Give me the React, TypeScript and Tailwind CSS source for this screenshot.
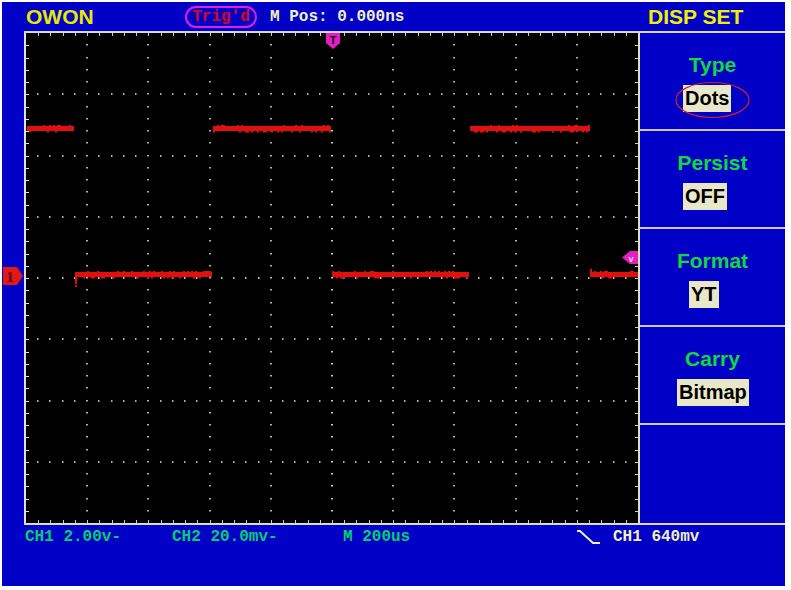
import React from "react";

// plotting area helpers (svg coords, origin at the grid's top-left inside the borders)
const GX = (k: number) => 2 + k * 61.2;
const GY = (m: number) => m * 61.25;

const rng = (seed: number) => {
  let s = seed;
  return () => {
    s = (s * 1103515245 + 12345) % 2147483648;
    return s / 2147483648;
  };
};

const highs: [number, number][] = [
  [3, 50],
  [189, 307],
  [446, 566],
];
const lows: [number, number][] = [
  [51, 188],
  [308, 445],
  [566, 614],
];

const Scope: React.FC = () => {
  const dots: React.ReactNode[] = [];
  for (let k = 1; k <= 9; k++) {
    for (let j = 1; j <= 39; j++) {
      const x = Math.round(GX(k));
      const y = Math.round(j * 12.25);
      const center = k === 5;
      dots.push(
        <rect key={`v${k}-${j}`} x={x - 1} y={y - 1} width={2} height={1.5} fill={center ? "#d0d0a0" : "#b0b0b0"} />
      );
    }
  }
  for (let m = 1; m <= 7; m++) {
    for (let i = 1; i <= 49; i++) {
      const x = Math.round(2 + i * 12.24);
      if (i % 5 === 0) continue;
      const y = Math.round(GY(m));
      const center = m === 4;
      dots.push(
        <rect key={`h${m}-${i}`} x={x - 1} y={y - 1} width={1.5} height={2} fill={center ? "#c8c870" : "#b0b0b0"} />
      );
    }
  }

  const ticks: React.ReactNode[] = [];
  for (let i = 1; i < 50; i++) {
    const x = Math.round(2 + i * 12.24);
    ticks.push(<rect key={`tt${i}`} x={x} y={0} width={1} height={3} fill="#d8d870" />);
    ticks.push(<rect key={`tb${i}`} x={x} y={487} width={1} height={3} fill="#d8d870" />);
  }
  for (let j = 1; j < 40; j++) {
    const y = Math.round(j * 12.25);
    ticks.push(<rect key={`tl${j}`} x={2} y={y} width={3} height={1} fill="#e0e0e0" />);
    ticks.push(<rect key={`tr${j}`} x={611} y={y} width={3} height={1} fill="#d8d870" />);
  }

  const noise: React.ReactNode[] = [];
  const r = rng(7);
  const addNoise = (segs: [number, number][], y: number, tag: string) =>
    segs.forEach(([a, b], si) => {
      for (let x = a; x < b; x += 2) {
        const v = r();
        if (v < 0.2) noise.push(<rect key={`${tag}${si}-${x}`} x={x} y={y - 1} width={2} height={1} fill="#e01010" />);
        else if (v < 0.45) noise.push(<rect key={`${tag}${si}-${x}`} x={x} y={y + 5} width={2} height={1.5} fill="#e01010" />);
      }
    });
  addNoise(highs, 93, "h");
  addNoise(lows, 239, "l");

  return (
    <svg width={616} height={490} className="block bg-black shrink-0">
      {dots}
      <rect x={0} y={0} width={2} height={490} fill="#e0e0e0" />
      <rect x={614} y={0} width={2} height={490} fill="#e0e0b0" />
      {ticks}
      {highs.map(([a, b]) => (
        <rect key={`H${a}`} x={a} y={93} width={b - a} height={5} fill="#e01010" />
      ))}
      {lows.map(([a, b]) => (
        <rect key={`L${a}`} x={a} y={239} width={b - a} height={5} fill="#e01010" />
      ))}
      {noise}
      <rect x={51} y={239} width={2} height={12} fill="#e01010" />
      <rect x={51} y={252} width={2} height={2} fill="#e01010" />
      <rect x={566} y={236} width={2} height={8} fill="#e01010" />
      {/* trigger position marker */}
      <path d="M302 0 H316 V10 L309 16 L302 10 Z" fill="#e020c0" />
      <text x={309} y={11} textAnchor="middle" fontSize={11} fontWeight={700} fill="#200020" fontFamily="Liberation Sans, sans-serif">
        T
      </text>
      {/* trigger level marker */}
      <path d="M614 218 V231 H606 L598 224.5 L606 218 Z" fill="#e020c0" />
      <text x={607} y={229} textAnchor="middle" fontSize={9} fontWeight={700} fill="#f0d0f0" fontFamily="Liberation Sans, sans-serif">
        v
      </text>
    </svg>
  );
};

const MenuItem: React.FC<{ title: string; value: string; offset: string; circled?: boolean }> = ({
  title,
  value,
  offset,
  circled,
}) => (
  <div className="relative h-[98px] border-b-2 border-[#c8c8f0] flex flex-col pt-[20px]">
    <div className="text-center text-[21px] leading-[24px] font-bold text-[#10d840]">{title}</div>
    <div className={`mt-[8px] self-start ${offset} bg-[#e8e8c8] px-[2px] h-[27px] leading-[27px] text-[20px] font-bold text-black`}>
      {value}
    </div>
    {circled && (
      <svg className="absolute left-0 top-0" width={145} height={96}>
        <ellipse cx={72.5} cy={67} rx={36.5} ry={17.5} fill="none" stroke="#d02030" strokeWidth={1.2} />
      </svg>
    )}
  </div>
);

export default function App() {
  return (
    <div className="w-[791px] h-[590px] bg-white pt-[2px] pl-[2px] font-['Liberation_Sans',Arial,sans-serif]">
      <div className="w-[783px] h-[584px] bg-[#0000c6] flex flex-col">
        {/* top bar */}
        <div className="h-[29px] flex items-center pl-[24px]">
          <div className="w-[159px] text-[21px] font-bold text-[#e8e800] leading-none">OWON</div>
          <div className="w-[72px] h-[22px] rounded-full border-2 border-[#e020e0] flex items-center justify-center font-['Liberation_Mono',monospace] text-[16px] font-bold text-[#e00020] leading-none">
            Trig'd
          </div>
          <div className="ml-[13px] font-['Liberation_Mono',monospace] text-[16px] font-bold text-[#f0f0c0] leading-none">
            M Pos: 0.000ns
          </div>
          <div className="ml-auto w-[145px] pl-[8px] text-[21px] font-bold text-[#f0f000] leading-none">DISP SET</div>
        </div>

        {/* screen + menu */}
        <div className="h-[494px] flex">
          <div className="relative w-[22px] shrink-0">
            <svg className="absolute left-[1px] top-[236px]" width={21} height={18}>
              <path d="M0 0 H14 L20 9 L14 18 H0 Z" fill="#e01818" />
              <text x={7} y={15} textAnchor="middle" fontSize={15} fontWeight={700} fill="#600000" fontFamily="Liberation Serif, serif">
                1
              </text>
            </svg>
          </div>
          <div className="flex-1 flex border-y-2 border-[#d8d8ec]">
            <Scope />
            <div className="flex-1 flex flex-col">
              <MenuItem title="Type" value="Dots" offset="ml-[43px]" circled />
              <MenuItem title="Persist" value="OFF" offset="ml-[43px]" />
              <MenuItem title="Format" value="YT" offset="ml-[49px]" />
              <MenuItem title="Carry" value="Bitmap" offset="ml-[37px]" />
            </div>
          </div>
        </div>

        {/* status bar */}
        <div className="flex items-start pt-[4px] pl-[23px] font-['Liberation_Mono',monospace] text-[16px] font-bold leading-[16px] text-[#00d070]">
          <div className="w-[147px]">CH1 2.00v-</div>
          <div className="w-[171px]">CH2 20.0mv-</div>
          <div className="w-[234px]">M 200us</div>
          <svg className="mt-[1px]" width={24} height={15}>
            <path d="M0 1 H3 L16 13 H23" fill="none" stroke="#f0f0c0" strokeWidth={2} />
          </svg>
          <div className="ml-[12px] text-[#f0f0c0]">CH1 640mv</div>
        </div>
      </div>
    </div>
  );
}
